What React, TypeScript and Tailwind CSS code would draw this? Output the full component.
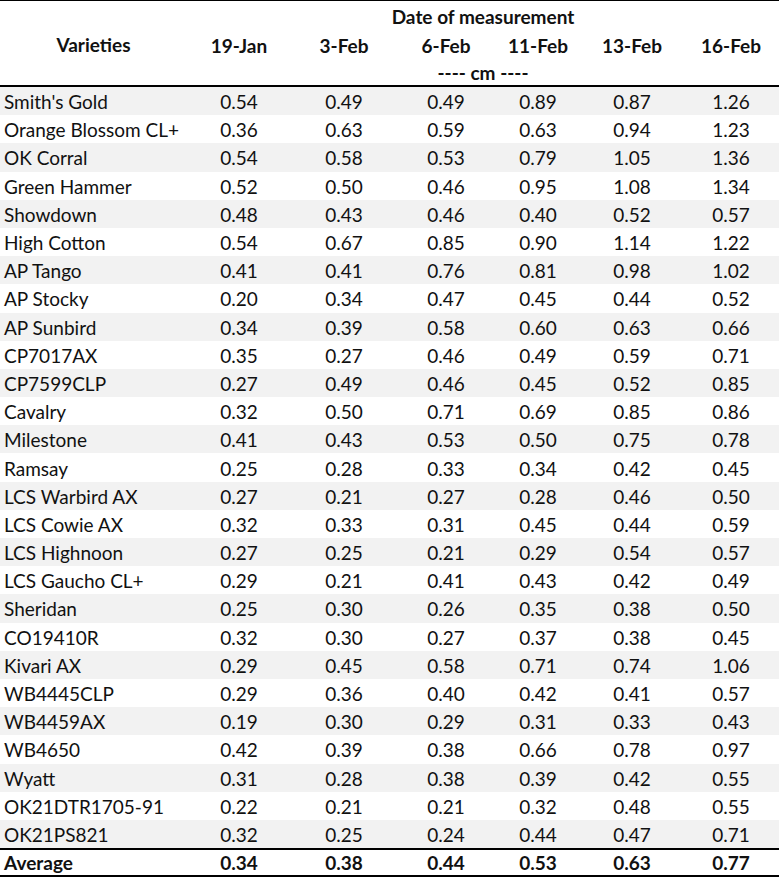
const rows: [string, string[]][] = [
  ["Smith's Gold", ['0.54', '0.49', '0.49', '0.89', '0.87', '1.26']],
  ['Orange Blossom CL+', ['0.36', '0.63', '0.59', '0.63', '0.94', '1.23']],
  ['OK Corral', ['0.54', '0.58', '0.53', '0.79', '1.05', '1.36']],
  ['Green Hammer', ['0.52', '0.50', '0.46', '0.95', '1.08', '1.34']],
  ['Showdown', ['0.48', '0.43', '0.46', '0.40', '0.52', '0.57']],
  ['High Cotton', ['0.54', '0.67', '0.85', '0.90', '1.14', '1.22']],
  ['AP Tango', ['0.41', '0.41', '0.76', '0.81', '0.98', '1.02']],
  ['AP Stocky', ['0.20', '0.34', '0.47', '0.45', '0.44', '0.52']],
  ['AP Sunbird', ['0.34', '0.39', '0.58', '0.60', '0.63', '0.66']],
  ['CP7017AX', ['0.35', '0.27', '0.46', '0.49', '0.59', '0.71']],
  ['CP7599CLP', ['0.27', '0.49', '0.46', '0.45', '0.52', '0.85']],
  ['Cavalry', ['0.32', '0.50', '0.71', '0.69', '0.85', '0.86']],
  ['Milestone', ['0.41', '0.43', '0.53', '0.50', '0.75', '0.78']],
  ['Ramsay', ['0.25', '0.28', '0.33', '0.34', '0.42', '0.45']],
  ['LCS Warbird AX', ['0.27', '0.21', '0.27', '0.28', '0.46', '0.50']],
  ['LCS Cowie AX', ['0.32', '0.33', '0.31', '0.45', '0.44', '0.59']],
  ['LCS Highnoon', ['0.27', '0.25', '0.21', '0.29', '0.54', '0.57']],
  ['LCS Gaucho CL+', ['0.29', '0.21', '0.41', '0.43', '0.42', '0.49']],
  ['Sheridan', ['0.25', '0.30', '0.26', '0.35', '0.38', '0.50']],
  ['CO19410R', ['0.32', '0.30', '0.27', '0.37', '0.38', '0.45']],
  ['Kivari AX', ['0.29', '0.45', '0.58', '0.71', '0.74', '1.06']],
  ['WB4445CLP', ['0.29', '0.36', '0.40', '0.42', '0.41', '0.57']],
  ['WB4459AX', ['0.19', '0.30', '0.29', '0.31', '0.33', '0.43']],
  ['WB4650', ['0.42', '0.39', '0.38', '0.66', '0.78', '0.97']],
  ['Wyatt', ['0.31', '0.28', '0.38', '0.39', '0.42', '0.55']],
  ['OK21DTR1705-91', ['0.22', '0.21', '0.21', '0.32', '0.48', '0.55']],
  ['OK21PS821', ['0.32', '0.25', '0.24', '0.44', '0.47', '0.71']],
]

const dates = ['19-Jan', '3-Feb', '6-Feb', '11-Feb', '13-Feb', '16-Feb']
const averages = ['0.34', '0.38', '0.44', '0.53', '0.63', '0.77']

// column widths picked so the centres line up with the sheet
const cols = 'grid grid-cols-[187px_104px_106px_98px_86px_102px_96px]'

export default function App() {
  return (
    <div
      className="w-[779px] bg-white text-[19px] leading-none text-[#111]"
      style={{ fontFamily: 'Lato, "Liberation Sans", sans-serif' }}
    >
      <div className={`${cols} border-t border-black border-b-2`}>
        <div className="row-span-3 flex items-center justify-center pt-[2px] font-bold">Varieties</div>
        <div className="col-span-6 flex h-[30px] items-center justify-center font-bold">
          Date of measurement
        </div>
        {dates.map((d) => (
          <div key={d} className="flex h-[28px] items-center justify-center font-bold">
            {d}
          </div>
        ))}
        <div className="col-span-6 flex h-[26px] items-center justify-center font-bold">
          ---- cm ----
        </div>
      </div>

      {rows.map(([name, vals], i) => (
        <div key={name} className={`${cols} h-[28.2px] ${i % 2 === 0 ? 'bg-[#f2f2f2]' : 'bg-white'}`}>
          <div className="flex items-center pl-[4px] pt-[1px]">{name}</div>
          {vals.map((v, j) => (
            <div key={j} className="flex items-center justify-center pt-[1px]">
              {v}
            </div>
          ))}
        </div>
      ))}

      <div className={`${cols} h-[29px] border-y-2 border-black font-bold`}>
        <div className="flex items-center pl-[4px]">Average</div>
        {averages.map((v, j) => (
          <div key={j} className="flex items-center justify-center">
            {v}
          </div>
        ))}
      </div>
    </div>
  )
}
